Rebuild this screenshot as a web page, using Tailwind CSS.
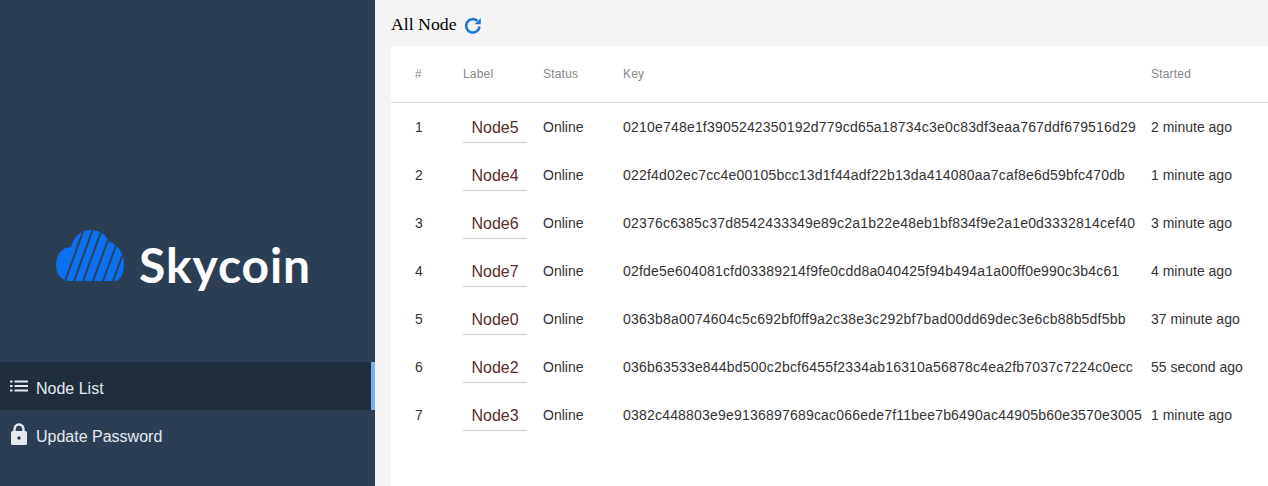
<!DOCTYPE html>
<html lang="en">
<head>
    <meta charset="UTF-8">
    <meta name="viewport" content="width=device-width, initial-scale=1.0">
    <script src="https://cdn.jsdelivr.net/npm/@tailwindcss/browser@4"></script>
    <title>All Node</title>
</head>
<body class="bg-[#f5f5f5] font-['Liberation_Sans',Arial,sans-serif] overflow-hidden">
    <div class="flex h-[486px] w-[1268px]">
        <!-- sidebar -->
        <aside class="w-[375px] shrink-0 bg-[#2b3e54]">
            <div class="h-[362px] flex items-start pl-[56px] pt-[229px] gap-[14px]">
                <svg width="69" height="56" viewBox="0 0 69 56">
                    <defs>
                        <clipPath id="cloud">
                            <path d="M14 52C5 52 0 45 0 36C0 26 6 18 15 18C17 8 25 1 35 1C44 1 50 6 53 13C61 14 68 24 68 35C68 45 64 52 58 52Z"/>
                        </clipPath>
                    </defs>
                    <g clip-path="url(#cloud)">
                        <rect width="69" height="56" fill="#0c6fee"/>
                        <g stroke="#2b3e54" stroke-width="1.800">
                            <path d="M9 52L28 0"/>
                            <path d="M18 52L37 0"/>
                            <path d="M27 52L46 0"/>
                            <path d="M37 52L56 0"/>
                            <path d="M47 52L66 0"/>
                            <path d="M57 52L76 0"/>
                        </g>
                    </g>
                </svg>
                <span class="font-['Lato',sans-serif] font-bold text-[48px] leading-[56px] mt-[8px] text-white tracking-[0.9px]">Skycoin</span>
            </div>
            <nav class="text-[16px] text-[#e6eaee]">
                <a class="h-12 flex items-center pl-[10px] gap-[8px] bg-[#1f2d3d] border-r-4 border-[#7db0e8]">
                    <svg width="18" height="12" viewBox="0 0 18 12" fill="#e6eaee">
                        <rect x="0" y="0.500" width="2.500" height="2"/>
                        <rect x="0" y="5" width="2.500" height="2"/>
                        <rect x="0" y="9.500" width="2.500" height="2"/>
                        <rect x="4.500" y="0.500" width="13.500" height="2"/>
                        <rect x="4.500" y="5" width="13.500" height="2"/>
                        <rect x="4.500" y="9.500" width="13.500" height="2"/>
                    </svg>
                    <span class="pt-[6px]">Node List</span>
                </a>
                <a class="h-12 flex items-center pl-[11px] gap-[9px]">
                    <svg width="16" height="22" viewBox="0 0 16 22" class="mb-[1px]">
                        <path d="M8 1.500C5 1.500 3.500 3.700 3.500 6.500V9" fill="none" stroke="#e6eaee" stroke-width="2.400"/>
                        <path d="M8 1.500C11 1.500 12.500 3.700 12.500 6.500V9" fill="none" stroke="#e6eaee" stroke-width="2.400"/>
                        <rect x="0" y="8" width="16" height="14" rx="1.500" fill="#e6eaee"/>
                        <circle cx="8" cy="15" r="1.700" fill="#2b3e54"/>
                    </svg>
                    <span class="pt-[6px]">Update Password</span>
                </a>
            </nav>
        </aside>

        <!-- main -->
        <main class="flex-1 min-w-0 pl-4 flex flex-col">
            <div class="h-[46px] flex items-center gap-[7px] pt-[2px]">
                <h1 class="font-['Liberation_Serif',serif] text-[17.750px] text-black">All Node</h1>
                <svg width="18" height="18" viewBox="0 0 18 18" fill="none" class="mt-[3px]">
                    <path d="M15.500 9.500A6.700 6.700 0 1 1 13.300 3.800" stroke="#1b76d8" stroke-width="2.600"/>
                    <path d="M16.800 1V7.200H10.600Z" fill="#1b76d8"/>
                </svg>
            </div>
            <div class="flex-1 bg-white">
                <table class="table-fixed w-full text-left text-[14px] text-[#333]">
                    <colgroup>
                        <col class="w-[72px]">
                        <col class="w-[80px]">
                        <col class="w-[80px]">
                        <col class="w-[528px]">
                        <col>
                    </colgroup>
                    <thead class="text-[12px] text-[#888] tracking-[0.2px]">
                        <tr class="h-[56px] border-b border-[#ddd]">
                            <th class="font-normal pl-6 pt-[1px]">#</th>
                            <th class="font-normal pt-[1px]">Label</th>
                            <th class="font-normal pt-[1px]">Status</th>
                            <th class="font-normal pt-[1px]">Key</th>
                            <th class="font-normal pt-[1px]">Started</th>
                        </tr>
                    </thead>
                    <tbody id="node-rows"></tbody>
                </table>
            </div>
        </main>
    </div>

    <script>
        const nodes = [
            ['Node5', '0210e748e1f3905242350192d779cd65a18734c3e0c83df3eaa767ddf679516d29', '2 minute ago'],
            ['Node4', '022f4d02ec7cc4e00105bcc13d1f44adf22b13da414080aa7caf8e6d59bfc470db', '1 minute ago'],
            ['Node6', '02376c6385c37d8542433349e89c2a1b22e48eb1bf834f9e2a1e0d3332814cef40', '3 minute ago'],
            ['Node7', '02fde5e604081cfd03389214f9fe0cdd8a040425f94b494a1a00ff0e990c3b4c61', '4 minute ago'],
            ['Node0', '0363b8a0074604c5c692bf0ff9a2c38e3c292bf7bad00dd69dec3e6cb88b5df5bb', '37 minute ago'],
            ['Node2', '036b63533e844bd500c2bcf6455f2334ab16310a56878c4ea2fb7037c7224c0ecc', '55 second ago'],
            ['Node3', '0382c448803e9e9136897689cac066ede7f11bee7b6490ac44905b60e3570e3005', '1 minute ago']
        ];

        document.getElementById('node-rows').innerHTML = nodes.map((node, i) => `
            <tr class="h-12">
                <td class="pl-6 pt-[2px]">${i + 1}</td>
                <td class="pt-[2px]"><div class="w-16 h-[30px] mt-[2px] leading-[30px] text-center text-[16px] text-[#5b2c2c] border-b border-[#ccc]">${node[0]}</div></td>
                <td class="pt-[2px]">Online</td>
                <td class="pt-[2px] whitespace-nowrap tracking-[0.2px]">${node[1]}</td>
                <td class="pt-[2px] whitespace-nowrap">${node[2]}</td>
            </tr>`).join('');
    </script>
</body>
</html>
